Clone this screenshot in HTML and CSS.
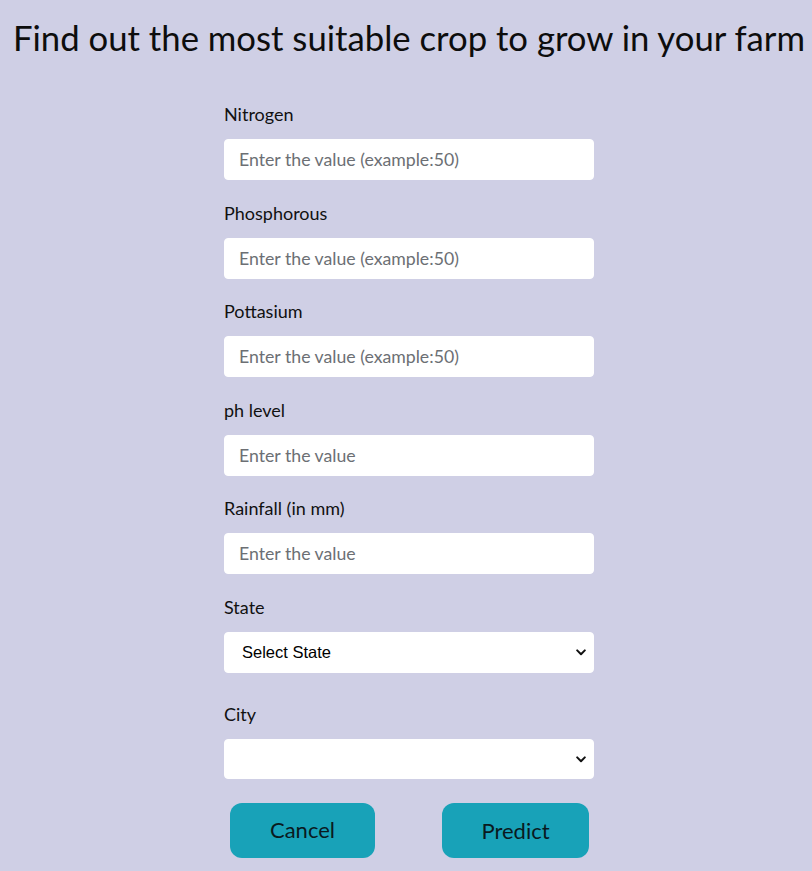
FILE: index.html
```html
<!DOCTYPE html>
<html>
<head>
<meta charset="utf-8">
<link rel="stylesheet" href="styles.css">
</head>
<body>
<h1 class="title">Find out the most suitable crop to grow in your farm</h1>
<form class="crop-form">
  <div class="field">
    <label class="label">Nitrogen</label>
    <input class="input" type="text" placeholder="Enter the value (example:50)">
  </div>
  <div class="field">
    <label class="label">Phosphorous</label>
    <input class="input" type="text" placeholder="Enter the value (example:50)">
  </div>
  <div class="field">
    <label class="label">Pottasium</label>
    <input class="input" type="text" placeholder="Enter the value (example:50)">
  </div>
  <div class="field">
    <label class="label">ph level</label>
    <input class="input" type="text" placeholder="Enter the value">
  </div>
  <div class="field">
    <label class="label">Rainfall (in mm)</label>
    <input class="input" type="text" placeholder="Enter the value">
  </div>
  <div class="field field-select">
    <label class="label">State</label>
    <div class="select-wrap">
      <select class="select"><option>Select State</option></select>
      <svg class="chev" width="10" height="7" viewBox="0 0 10 7"><path d="M1.2 1.4 L5 5.2 L8.8 1.4" fill="none" stroke="#111" stroke-width="2" stroke-linecap="round" stroke-linejoin="round"/></svg>
    </div>
  </div>
  <div class="field field-city">
    <label class="label">City</label>
    <div class="select-wrap">
      <select class="select city"><option></option></select>
      <svg class="chev" width="10" height="7" viewBox="0 0 10 7"><path d="M1.2 1.4 L5 5.2 L8.8 1.4" fill="none" stroke="#111" stroke-width="2" stroke-linecap="round" stroke-linejoin="round"/></svg>
    </div>
  </div>
  <div class="actions">
    <button type="button" class="btn btn-cancel">Cancel</button>
    <button type="button" class="btn btn-predict">Predict</button>
  </div>
</form>
</body>
</html>
```
FILE: styles.css
```css
html, body {
  margin: 0;
  padding: 0;
  background: #cfcfe5;
  height: 100%;
}
body {
  font-family: "Lato", "Noto Sans", sans-serif;
  color: #111;
  overflow: hidden;
}
.title {
  margin: 0;
  padding-top: 15px;
  font-family: "Lato", sans-serif;
  font-weight: 400;
  font-size: 34.7px;
  line-height: 46px;
  text-align: center;
  white-space: nowrap;
  color: #0d0d0d;
  position: relative;
  left: 3px;
}
.crop-form {
  width: 370px;
  margin: 0 auto;
  padding-top: 41px;
  position: relative;
  left: 3px;
}
.field {
  display: flex;
  flex-direction: column;
  margin-bottom: 20.5px;
}
.label {
  font-size: 18px;
  line-height: 24px;
  margin-bottom: 13px;
  color: #111;
}
.input, .select {
  box-sizing: border-box;
  width: 370px;
  height: 41px;
  border: 1px solid #fff;
  border-radius: 4px;
  background: #fff;
  font-family: "Lato", sans-serif;
  font-size: 17.7px;
  padding: 0 14px;
  outline: none;
}
.input::placeholder {
  color: #6c6f74;
}
.field-select {
  margin-bottom: 29px;
}
.field-city {
  margin-bottom: 24px;
}
.select-wrap {
  position: relative;
}
.select {
  appearance: none;
  -webkit-appearance: none;
  color: #000;
  padding-left: 17px;
  font-family: "Liberation Sans", sans-serif;
  font-size: 16.5px;
}
.select.city {
  height: 40px;
}
.chev {
  position: absolute;
  right: 8px;
  top: 17px;
}
.actions {
  display: flex;
  justify-content: space-between;
  padding: 0 5px 0 6px;
}
.btn {
  width: 145px;
  height: 55px;
  border: none;
  border-radius: 12px;
  background: #18a2b8;
  color: #0a1a1f;
  font-family: "Lato", sans-serif;
  font-size: 22px;
  cursor: pointer;
}
.btn-cancel {
  padding-bottom: 3px;
}
.btn-predict {
  width: 147px;
}
```
